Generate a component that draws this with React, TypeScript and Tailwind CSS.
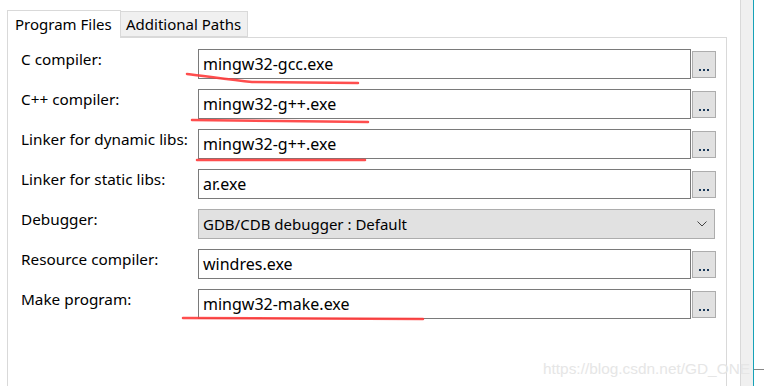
import React from 'react';

const rows: { label: string; value: string; kind: 'file' | 'combo' }[] = [
    { label: 'C compiler:', value: 'mingw32-gcc.exe', kind: 'file' },
    { label: 'C++ compiler:', value: 'mingw32-g++.exe', kind: 'file' },
    { label: 'Linker for dynamic libs:', value: 'mingw32-g++.exe', kind: 'file' },
    { label: 'Linker for static libs:', value: 'ar.exe', kind: 'file' },
    { label: 'Debugger:', value: 'GDB/CDB debugger : Default', kind: 'combo' },
    { label: 'Resource compiler:', value: 'windres.exe', kind: 'file' },
    { label: 'Make program:', value: 'mingw32-make.exe', kind: 'file' },
];

const BrowseButton: React.FC = () => (
    <button className="ml-[1px] w-[24px] h-[27px] bg-[#e1e1e1] border border-[#adadad] flex items-end justify-center pb-[6px]">
        <span className="flex gap-[2px]">
            <span className="w-[2px] h-[2px] bg-[#1a3a5a]" />
            <span className="w-[2px] h-[2px] bg-[#1a3a5a]" />
            <span className="w-[2px] h-[2px] bg-[#1a3a5a]" />
        </span>
    </button>
);

const Row: React.FC<{ label: string; value: string; kind: 'file' | 'combo' }> = ({ label, value, kind }) => (
    <div className="flex h-[30px]">
        <label className="w-[177px] leading-[20px] text-[15.3px] text-black">{label}</label>
        {kind === 'file' ? (
            <div className="flex items-center">
                <div className="w-[493px] h-[30px] border border-[#7a7a7a] bg-white flex items-center pl-[4px] pb-[1px] text-[16px] text-black">
                    {value}
                </div>
                <BrowseButton />
            </div>
        ) : (
            <div className="w-[517px] h-[30px] border border-[#adadad] bg-[#e1e1e1] flex items-center justify-between pl-[4px] pr-[6px] text-black">
                <span>{value}</span>
                <svg width="10" height="6" viewBox="0 0 10 6" className="mr-[1px]">
                    <path d="M0.5 0.5 L5 5 L9.5 0.5" fill="none" stroke="#444" strokeWidth="1" />
                </svg>
            </div>
        )}
    </div>
);

const App: React.FC = () => {
    return (
        <div
            className="relative w-[764px] h-[386px] bg-white overflow-hidden flex text-[15px]"
            style={{ fontFamily: '"Noto Sans", "Open Sans", sans-serif' }}
        >
            <div className="flex flex-col pl-[7px] pt-[10px] w-[727px]">
                {/* tabs */}
                <div className="flex items-end h-[27px]">
                    <div className="h-[28px] w-[114px] border border-b-0 border-[#d9d9d9] bg-white pl-[7px] pt-[2px] relative z-10 -mb-[1px] text-black">
                        Program Files
                    </div>
                    <div className="h-[26px] w-[127px] border border-l-0 border-[#d9d9d9] bg-[#f0f0f0] pl-[5px] text-black leading-[25px]">
                        Additional Paths
                    </div>
                    <div className="flex-1" />
                </div>
                <div className="flex-1 border border-b-0 border-[#d9d9d9] pl-[13px] pt-[11px] flex flex-col gap-[10px]">
                    {rows.map((r) => (
                        <Row key={r.label} {...r} />
                    ))}
                </div>
            </div>
            <div className="w-[13px]" />
            <div className="w-[14px] h-full bg-[#f0f0f0] border-l border-[#d9d9d9] border-r border-r-[#17a2b8]" />
            <div className="flex-1 flex flex-col justify-end pb-[16px]">
                <div className="h-[1px] bg-[#888]" />
            </div>

            {/* hand-drawn red marks */}
            <svg className="absolute inset-0 pointer-events-none" width="764" height="386">
                <g fill="none" stroke="#ff3b3b" strokeWidth="2.5" strokeLinecap="round" opacity="0.9">
                    <path d="M187 74 C 205 76, 230 80, 252 82 L 358 83" />
                    <path d="M192 120 L 280 121 L 368 122" />
                    <path d="M197 160 L 365 160" />
                    <path d="M183 318 L 423 319" />
                </g>
            </svg>

            {/* watermark */}
            <div
                className="absolute left-[543px] top-[357px] text-[15.4px] text-[#e6e6e6] pointer-events-none whitespace-nowrap"
                style={{ fontFamily: '"Liberation Sans", Arial, sans-serif' }}
            >
                https://blog.csdn.net/GD_ONE
            </div>
        </div>
    );
};

export default App;
